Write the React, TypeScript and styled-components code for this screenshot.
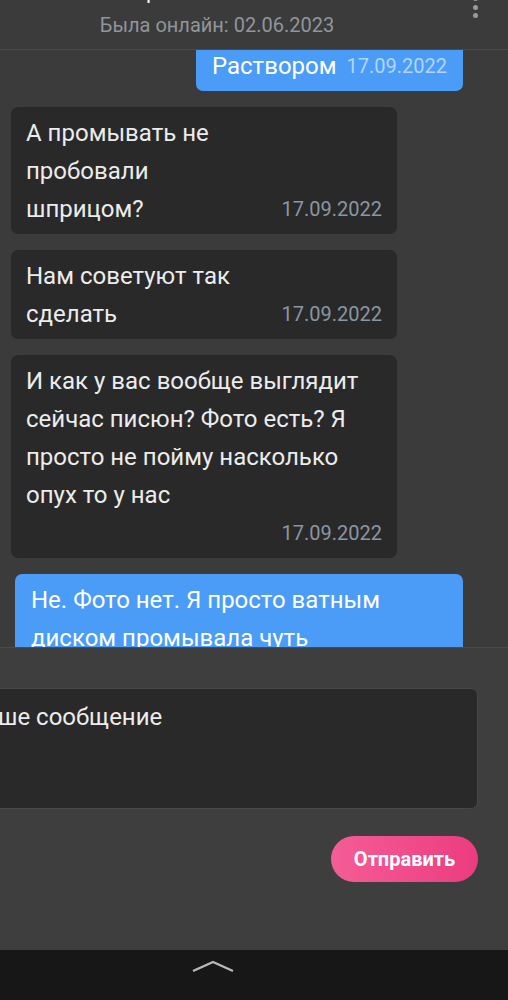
import React from "react";
import styled, { createGlobalStyle } from "styled-components";

const GlobalStyle = createGlobalStyle`
  * { box-sizing: border-box; }
  html, body { margin: 0; padding: 0; background: #3b3b3b; }
  body { font-family: Roboto, "Noto Sans", Arial, sans-serif; overflow: hidden; }
`;

const Screen = styled.div`
  display: flex;
  flex-direction: column;
  width: 508px;
  height: 1000px;
  overflow: hidden;
  background: #3b3b3b;
`;

const Header = styled.header`
  flex: 0 0 50px;
  display: flex;
  align-items: flex-start;
  background: #3b3b3b;
  border-bottom: 1px solid #4a4a4a;
  overflow: hidden;
`;

const TitleBlock = styled.div`
  flex: 0 0 434px;
  display: flex;
  flex-direction: column;
  align-items: center;
`;

const Title = styled.div`
  margin-top: -22px;
  font-size: 22px;
  line-height: 26px;
  color: #f2f2f2;
  white-space: nowrap;
`;

const Subtitle = styled.div`
  margin-top: 10px;
  font-size: 20px;
  line-height: 22px;
  color: #8f969c;
  white-space: nowrap;
`;

const Dots = styled.div`
  margin-left: 39px;
  margin-top: -4px;
  display: flex;
  flex-direction: column;
  gap: 3.5px;
`;

const Dot = styled.span`
  width: 5px;
  height: 5px;
  border-radius: 50%;
  background: #9a9a9a;
`;

const MessageArea = styled.main`
  flex: 1 1 auto;
  min-height: 0;
  overflow: hidden;
`;

const MessageList = styled.div`
  margin-top: -10px;
  padding: 0 45px 0 11px;
  display: flex;
  flex-direction: column;
  gap: 16px;
`;

const Bubble = styled.div<{ $out?: boolean; $width?: number }>`
  align-self: ${(p) => (p.$out ? "flex-end" : "flex-start")};
  width: ${(p) => (p.$width ? `${p.$width}px` : "auto")};
  padding: 7px ${(p) => (p.$out ? 16 : 15)}px 6px;
  border-radius: 7px;
  background: ${(p) => (p.$out ? "#4a9cf6" : "#292929")};
  display: flex;
  flex-wrap: wrap;
  align-items: flex-end;
  justify-content: space-between;
  column-gap: 10px;
`;

const MessageText = styled.div<{ $out?: boolean }>`
  font-size: 24px;
  line-height: 38px;
  color: ${(p) => (p.$out ? "#ffffff" : "#ececec")};
  white-space: pre-line;
`;

const Stamp = styled.div<{ $out?: boolean }>`
  margin-left: auto;
  font-size: 20px;
  line-height: 38px;
  color: ${(p) => (p.$out ? "#b4d5fb" : "#8a96a2")};
  white-space: nowrap;
`;

const Composer = styled.section`
  flex: 0 0 303px;
  display: flex;
  flex-direction: column;
  align-items: flex-end;
  padding: 40px 30px 0 0;
  background: #3e3e3e;
  border-top: 1px solid #4b4b4b;
`;

const Field = styled.textarea`
  align-self: stretch;
  margin-left: -46px;
  width: calc(100% + 46px);
  height: 121px;
  padding: 9px 15px;
  resize: none;
  border: 1px solid #474747;
  border-radius: 7px;
  background: #292929;
  font-family: Roboto, "Noto Sans", Arial, sans-serif;
  font-size: 24px;
  line-height: 38px;
  color: #ececec;
  outline: none;
  &::placeholder { color: #ececec; opacity: 1; }
`;

const SendButton = styled.button`
  margin-top: 27px;
  width: 147px;
  height: 46px;
  border: none;
  border-radius: 23px;
  background: linear-gradient(90deg, #f45d96 0%, #ec3c80 100%);
  color: #ffffff;
  font-family: Roboto, "Noto Sans", Arial, sans-serif;
  font-weight: 700;
  font-size: 20px;
  cursor: pointer;
`;

const NavBar = styled.nav`
  flex: 0 0 50px;
  display: flex;
  justify-content: flex-start;
  padding-left: 192px;
  padding-top: 9px;
  background: #171717;
`;

type Msg = { out?: boolean; text: string; date: string; width?: number };

const messages: Msg[] = [
  { out: true, text: "Раствором", date: "17.09.2022" },
  { text: "А промывать не\nпробовали\nшприцом?", date: "17.09.2022", width: 386 },
  { text: "Нам советуют так\nсделать", date: "17.09.2022", width: 386 },
  {
    text: "И как у вас вообще выглядит\nсейчас писюн? Фото есть? Я\nпросто не пойму насколько\nопух то у нас",
    date: "17.09.2022",
    width: 386,
  },
  {
    out: true,
    text: "Не. Фото нет. Я просто ватным\nдиском промывала чуть\nраствором",
    date: "17.09.2022",
    width: 448,
  },
];

export default function App() {
  return (
    <Screen>
      <GlobalStyle />
      <Header>
        <TitleBlock>
          <Title>Ирина Ивановна</Title>
          <Subtitle>Была онлайн: 02.06.2023</Subtitle>
        </TitleBlock>
        <Dots>
          <Dot />
          <Dot />
          <Dot />
        </Dots>
      </Header>
      <MessageArea>
        <MessageList>
          {messages.map((m, i) => (
            <Bubble key={i} $out={m.out} $width={m.width}>
              <MessageText $out={m.out}>{m.text}</MessageText>
              <Stamp $out={m.out}>{m.date}</Stamp>
            </Bubble>
          ))}
        </MessageList>
      </MessageArea>
      <Composer>
        <Field placeholder="Ваше сообщение" readOnly />
        <SendButton>Отправить</SendButton>
      </Composer>
      <NavBar>
        <svg width="44" height="16" viewBox="0 0 44 16" fill="none">
          <polyline points="1,12 21,3 41,12" stroke="#b9b9b9" strokeWidth="2.4" strokeLinecap="butt" strokeLinejoin="miter" />
        </svg>
      </NavBar>
    </Screen>
  );
}
